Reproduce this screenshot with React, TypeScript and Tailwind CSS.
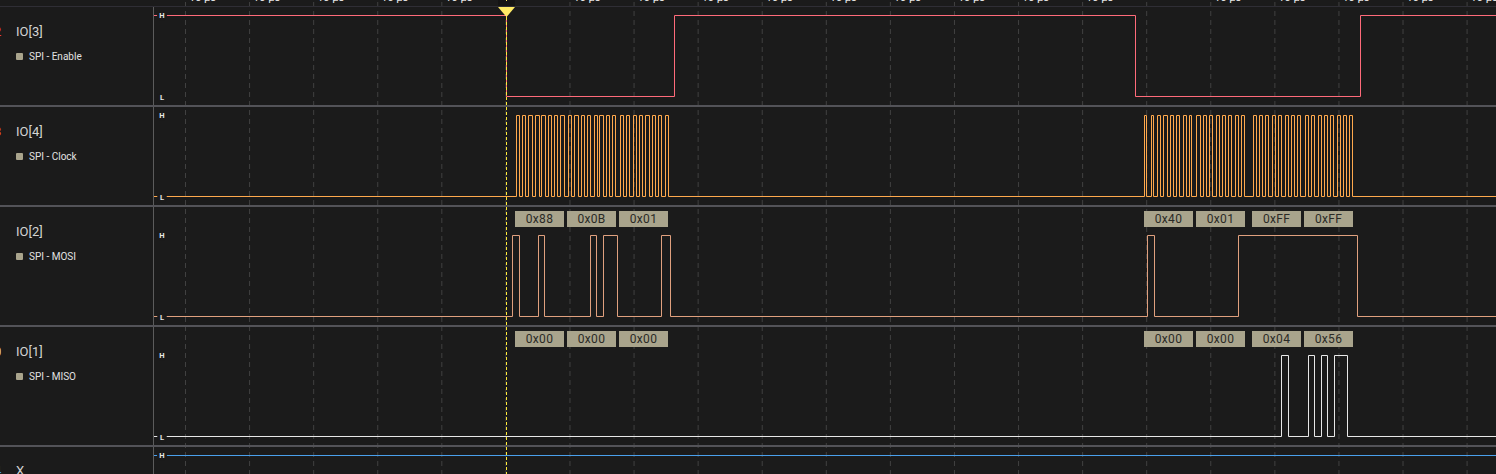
import React from 'react';

const GRID_START = 185.5;
const GRID_STEP = 64.08;

const gridLines = Array.from({ length: 21 }, (_, i) => GRID_START + GRID_STEP * i);

const clockEdges = [
  516, 519, 522, 525, 528, 532, 535, 539, 541, 545, 548, 551, 554, 557, 560, 564,
  568, 571, 574, 578, 581, 584, 587, 590, 594, 597, 599, 603, 606, 609, 612, 615,
  620, 623, 626, 629, 633, 636, 639, 642, 645, 649, 652, 655, 658, 661, 665, 668,
  1144, 1146, 1151, 1153, 1157, 1160, 1163, 1167, 1170, 1173, 1176, 1179, 1183, 1186, 1189, 1191,
  1196, 1200, 1203, 1206, 1209, 1212, 1216, 1219, 1222, 1225, 1228, 1231, 1235, 1238, 1241, 1244,
  1253, 1256, 1259, 1262, 1265, 1268, 1272, 1275, 1278, 1281, 1285, 1288, 1291, 1294, 1297, 1300,
  1305, 1308, 1311, 1314, 1318, 1321, 1324, 1327, 1330, 1333, 1337, 1340, 1343, 1346, 1349, 1352,
];

interface Decoded {
  x: number;
  text: string;
}

interface Channel {
  index: string;
  indexColor: string;
  name: string;
  label?: string;
  top: number;
  height: number;
  highY: number;
  lowY: number;
  color: string;
  startHigh?: boolean;
  edges: number[];
  decoded?: Decoded[];
}

const channels: Channel[] = [
  {
    index: '2',
    indexColor: 'text-[#ef4444]',
    name: 'IO[3]',
    label: 'SPI - Enable',
    top: 7,
    height: 98,
    highY: 15,
    lowY: 96,
    color: '#ff6b7a',
    startHigh: true,
    edges: [506, 674, 1135, 1360],
  },
  {
    index: '3',
    indexColor: 'text-[#f97316]',
    name: 'IO[4]',
    label: 'SPI - Clock',
    top: 107,
    height: 98,
    highY: 115,
    lowY: 196,
    color: '#ffa94d',
    edges: clockEdges,
  },
  {
    index: '1',
    indexColor: 'text-[#d9a27f]',
    name: 'IO[2]',
    label: 'SPI - MOSI',
    top: 207,
    height: 118,
    highY: 235,
    lowY: 316,
    color: '#e0a07e',
    edges: [512, 519, 538, 544, 590, 596, 603, 617, 661, 670, 1147, 1154, 1238, 1357],
    decoded: [
      { x: 515, text: '0x88' },
      { x: 567, text: '0x0B' },
      { x: 619, text: '0x01' },
      { x: 1144, text: '0x40' },
      { x: 1196, text: '0x01' },
      { x: 1252, text: '0xFF' },
      { x: 1304, text: '0xFF' },
    ],
  },
  {
    index: '0',
    indexColor: 'text-[#e5e5e5]',
    name: 'IO[1]',
    label: 'SPI - MISO',
    top: 327,
    height: 118,
    highY: 355,
    lowY: 436,
    color: '#e8e8e8',
    edges: [1281, 1288, 1308, 1314, 1321, 1327, 1334, 1347],
    decoded: [
      { x: 515, text: '0x00' },
      { x: 567, text: '0x00' },
      { x: 619, text: '0x00' },
      { x: 1144, text: '0x00' },
      { x: 1196, text: '0x00' },
      { x: 1252, text: '0x04' },
      { x: 1304, text: '0x56' },
    ],
  },
];

function wavePath(c: Channel) {
  const hi = c.highY + 0.5;
  const lo = c.lowY + 0.5;
  let high = !!c.startHigh;
  let d = `M154 ${high ? hi : lo}`;
  c.edges.forEach((edge) => {
    const x = edge + 0.5;
    high = !high;
    d += ` H${x} V${high ? hi : lo}`;
  });
  return `${d} H1496`;
}

function LevelTag({ text, top }: { text: string; top: number }) {
  return (
    <span
      className="absolute left-[3px] flex h-[10px] w-[10px] items-center justify-center rounded-full bg-[#1b1b1b] text-[7.5px] font-bold leading-none text-[#e8e8e8]"
      style={{ top }}
    >
      {text}
    </span>
  );
}

function ChannelRow({ c }: { c: Channel }) {
  return (
    <div className="flex border-b-2 border-[#535358]" style={{ height: c.height + 2 }}>
      <div className="relative w-[154px] shrink-0 overflow-hidden border-r border-[#5c5c5c] pt-[16px]">
        <div className="flex h-[18px] items-center text-[13px] text-[#d4d4d4]">
          <span className={`-ml-[6px] w-[22px] shrink-0 ${c.indexColor}`}>{c.index}</span>
          <span>{c.name}</span>
        </div>
        <div className="mt-[9px] flex h-[12px] items-center pl-[16px] text-[10px] text-[#e2e2e2]">
          <span className="mr-[6px] h-[7px] w-[7px] rounded-[1px] bg-[#a9a48c]" />
          <span>{c.label}</span>
        </div>
      </div>
      <div className="relative flex-1">
        <svg
          className="block h-full w-full"
          viewBox={`154 ${c.top} 1342 ${c.height}`}
          preserveAspectRatio="none"
        >
          <path d={wavePath(c)} fill="none" stroke={c.color} strokeWidth="1" />
        </svg>
        <LevelTag text="H" top={c.highY - c.top - 4.5} />
        <LevelTag text="L" top={c.lowY - c.top - 3} />
        {c.decoded?.map((d) => (
          <span
            key={d.x}
            className="absolute top-[4px] flex h-[16px] w-[49px] items-center justify-center bg-[#a9a48c] text-[12px] tracking-[0.3px] text-[#2a2a26]"
            style={{ left: d.x - 154 }}
          >
            {d.text}
          </span>
        ))}
      </div>
    </div>
  );
}

export default function App() {
  return (
    <div className="relative h-[474px] w-[1496px] overflow-hidden bg-[#1b1b1b] font-['Roboto',sans-serif]">
      <svg className="absolute left-0 top-[2px]" width="1496" height="472" viewBox="0 2 1496 472">
        {gridLines.map((x) => (
          <line key={x} x1={x} x2={x} y1="2" y2="474" stroke="#414141" strokeWidth="1" strokeDasharray="5 4" />
        ))}
      </svg>

      <div className="relative flex h-[7px] overflow-hidden border-b border-[#2f2e35] pl-[189px] text-[11px] leading-[12px] text-[#e8e8e8]">
        {gridLines.map((x, i) => (
          <span key={x} className="-mt-[8px] w-[64.08px] shrink-0">
            {i === 5 || i === 15 ? '' : '10 µs'}
          </span>
        ))}
      </div>

      <div className="relative">
        {channels.map((c) => (
          <ChannelRow key={c.name} c={c} />
        ))}
        <div className="flex h-[27px]">
          <div className="w-[154px] shrink-0 overflow-hidden border-r border-[#5c5c5c] pt-[15px] text-[13px] leading-[18px] text-[#d4d4d4]">
            <span className="-ml-[6px] inline-block w-[22px] text-[#3b9dff]">4</span>
            <span>X</span>
          </div>
          <div className="relative flex-1">
            <div className="mt-[8px] h-px bg-[#4aa0ec]" />
            <LevelTag text="H" top={3.5} />
          </div>
        </div>
      </div>

      {/* cursor */}
      <div className="absolute left-[498px] top-0 flex w-[17px] flex-col items-center">
        <div className="flex h-[6px] w-[17px] justify-center bg-[#141414]">
          <span className="h-px w-px bg-[#ffeb66]" />
        </div>
        <svg width="17" height="11" viewBox="0 0 17 11" className="mt-px block">
          <path d="M0 0 H17 L8.5 10 Z" fill="#ffeb66" />
        </svg>
      </div>
      <svg className="absolute left-[505px] top-[17px]" width="3" height="457">
        <line x1="1.5" x2="1.5" y1="0" y2="457" stroke="#ffeb3b" strokeWidth="1" strokeDasharray="3 2" />
      </svg>
    </div>
  );
}
